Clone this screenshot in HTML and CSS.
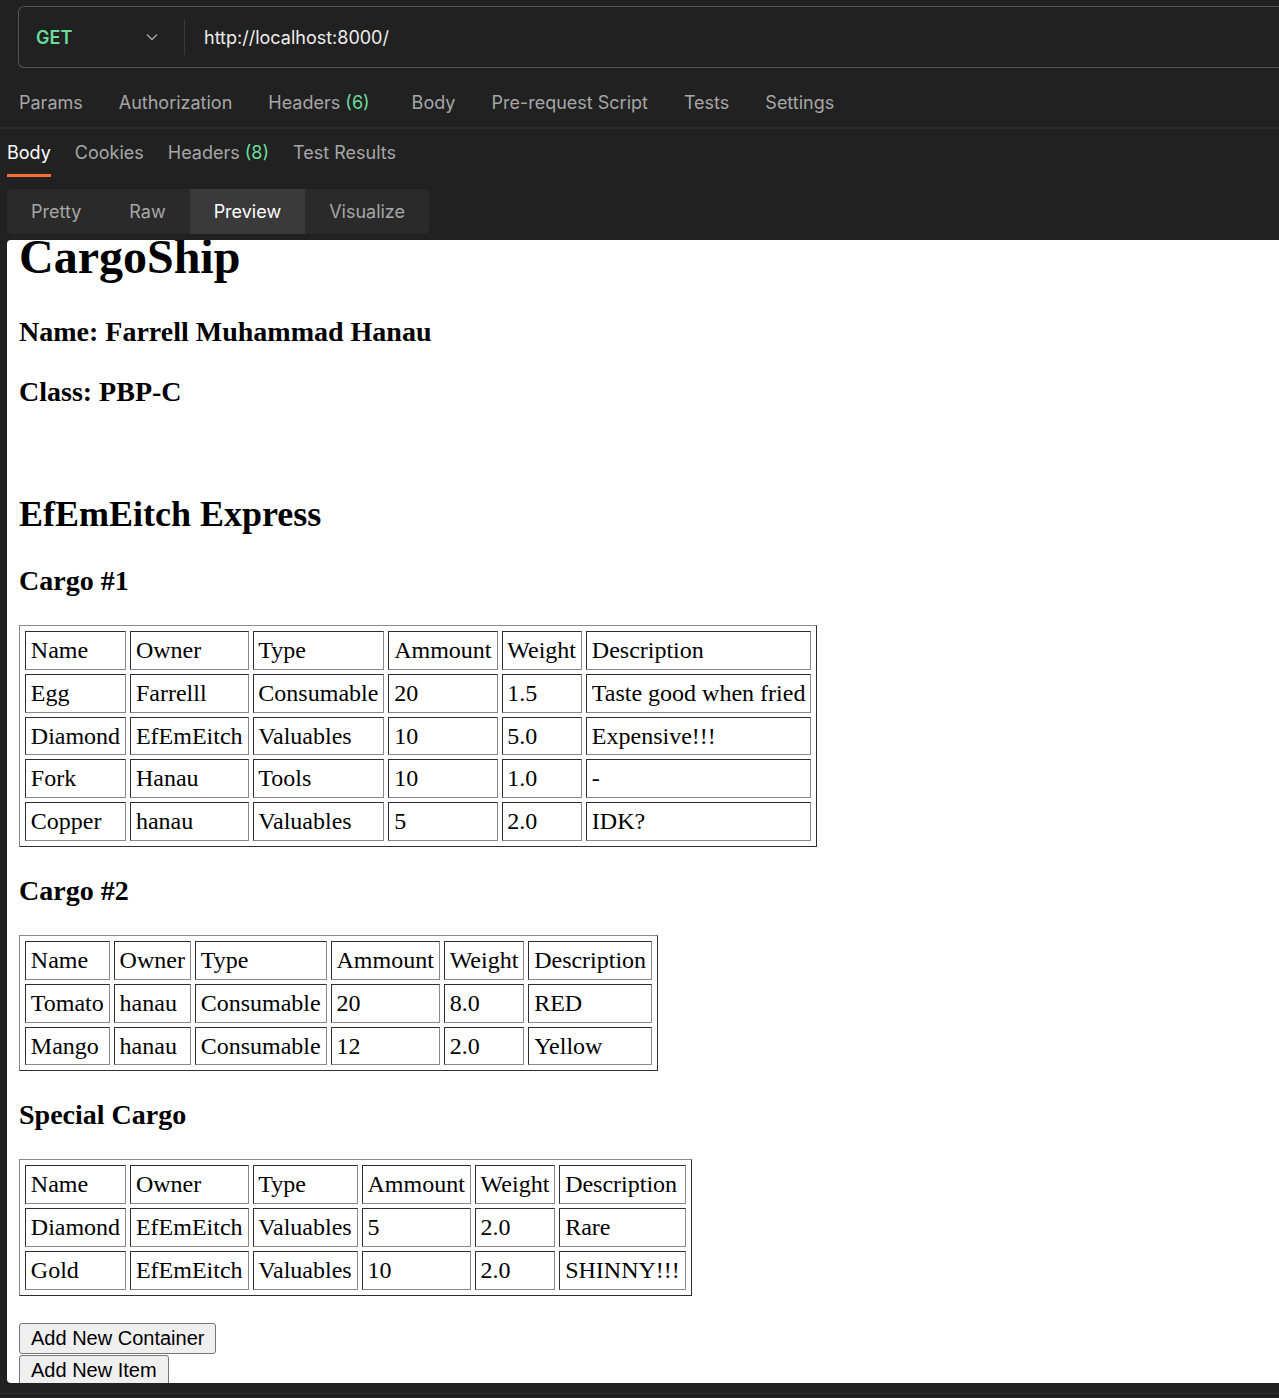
FILE: index.html
```html
<!DOCTYPE html>
<html lang="en">
<head>
<meta charset="utf-8">
<title>CargoShip - Postman</title>
<link rel="stylesheet" href="styles.css">
</head>
<body>
<div class="app">
  <div class="request">
    <div class="urlbar">
      <div class="method">
        <span class="get">GET</span>
        <svg class="chev" width="12" height="8" viewBox="0 0 12 8"><path d="M1 1.5 L6 6.5 L11 1.5" fill="none" stroke="#a6a6a6" stroke-width="1.3"/></svg>
      </div>
      <div class="divider"></div>
      <div class="url">http://localhost:8000/</div>
    </div>
    <nav class="req-tabs">
      <span class="tab">Params</span>
      <span class="tab">Authorization</span>
      <span class="tab tab-wide">Headers <span class="count">(6)</span></span>
      <span class="tab">Body</span>
      <span class="tab">Pre-request Script</span>
      <span class="tab">Tests</span>
      <span class="tab">Settings</span>
    </nav>
  </div>
  <div class="splitter"></div>
  <div class="response">
    <nav class="res-tabs">
      <span class="rtab active">Body</span>
      <span class="rtab">Cookies</span>
      <span class="rtab">Headers <span class="count">(8)</span></span>
      <span class="rtab">Test Results</span>
    </nav>
    <div class="seg">
      <span class="seg-item">Pretty</span>
      <span class="seg-item">Raw</span>
      <span class="seg-item active">Preview</span>
      <span class="seg-item">Visualize</span>
    </div>
    <div class="preview">
      <h1>CargoShip</h1>
      <h3>Name: Farrell Muhammad Hanau</h3>
      <h3>Class: PBP-C</h3>
      <div class="spacer"></div>
      <h2>EfEmEitch Express</h2>

      <h3>Cargo #1</h3>
      <table>
        <tr><td>Name</td><td>Owner</td><td>Type</td><td>Ammount</td><td>Weight</td><td>Description</td></tr>
        <tr><td>Egg</td><td>Farrelll</td><td>Consumable</td><td>20</td><td>1.5</td><td>Taste good when fried</td></tr>
        <tr><td>Diamond</td><td>EfEmEitch</td><td>Valuables</td><td>10</td><td>5.0</td><td>Expensive!!!</td></tr>
        <tr><td>Fork</td><td>Hanau</td><td>Tools</td><td>10</td><td>1.0</td><td>-</td></tr>
        <tr><td>Copper</td><td>hanau</td><td>Valuables</td><td>5</td><td>2.0</td><td>IDK?</td></tr>
      </table>

      <h3>Cargo #2</h3>
      <table>
        <tr><td>Name</td><td>Owner</td><td>Type</td><td>Ammount</td><td>Weight</td><td>Description</td></tr>
        <tr><td>Tomato</td><td>hanau</td><td>Consumable</td><td>20</td><td>8.0</td><td>RED</td></tr>
        <tr><td>Mango</td><td>hanau</td><td>Consumable</td><td>12</td><td>2.0</td><td>Yellow</td></tr>
      </table>

      <h3>Special Cargo</h3>
      <table>
        <tr><td>Name</td><td>Owner</td><td>Type</td><td>Ammount</td><td>Weight</td><td>Description</td></tr>
        <tr><td>Diamond</td><td>EfEmEitch</td><td>Valuables</td><td>5</td><td>2.0</td><td>Rare</td></tr>
        <tr><td>Gold</td><td>EfEmEitch</td><td>Valuables</td><td>10</td><td>2.0</td><td>SHINNY!!!</td></tr>
      </table>

      <div class="actions">
        <button type="button">Add New Container</button>
        <button type="button">Add New Item</button>
      </div>
    </div>
  </div>
  <div class="footer"></div>
</div>
</body>
</html>
```

FILE: styles.css
```css
html, body {
  margin: 0;
  padding: 0;
  background: #212121;
  overflow: hidden;
}

.app {
  height: 1398px;
  font-family: Inter, "Noto Sans", sans-serif;
  color: #a6a6a6;
}

/* request area */
.request {
  padding: 6px 0 0 18px;
}

.urlbar {
  display: flex;
  align-items: center;
  box-sizing: border-box;
  height: 62px;
  border: 1px solid #555555;
  border-right: none;
  border-radius: 6px 0 0 6px;
}

.method {
  display: flex;
  align-items: center;
  box-sizing: border-box;
  width: 165px;
  padding-left: 17px;
}

.get {
  color: #6bdd9a;
  font-size: 18px;
  font-weight: 600;
}

.chev {
  margin-left: auto;
  margin-right: 26px;
}

.divider {
  width: 1px;
  height: 36px;
  background: #3a3a3a;
}

.url {
  padding-left: 19px;
  font-size: 18px;
  color: #ededed;
}

.req-tabs {
  display: flex;
  box-sizing: border-box;
  height: 59px;
  padding: 23px 0 0 1px;
  gap: 36px;
}

.tab {
  font-size: 18px;
  line-height: 24px;
  color: #a6a6a6;
}

.tab-wide {
  margin-right: 6px;
}

.count {
  color: #6bdd9a;
}

.splitter {
  height: 2px;
  background: #2c2c2c;
}

/* response area */
.res-tabs {
  display: flex;
  gap: 24px;
  padding-left: 7px;
}

.rtab {
  padding: 12px 0 9px;
  font-size: 18px;
  line-height: 24px;
  border-bottom: 3px solid transparent;
  color: #a6a6a6;
}

.rtab.active {
  color: #ffffff;
  border-bottom-color: #ff6c37;
}

.seg {
  display: inline-flex;
  margin: 12px 0 0 7px;
  height: 45px;
  background: #2a2a2a;
  border-radius: 5px;
  overflow: hidden;
}

.seg-item {
  display: flex;
  align-items: center;
  padding: 0 24px;
  font-size: 18px;
  color: #a6a6a6;
}

.seg-item.active {
  background: #3a3a3a;
  color: #ffffff;
}

.preview {
  box-sizing: border-box;
  height: 1143px;
  margin: 6px 0 0 7px;
  padding: 0 12px;
  background: #ffffff;
  border-radius: 4px 0 0 4px;
  overflow: hidden;
  font-family: "Liberation Serif", "Times New Roman", serif;
  color: #000000;
}

.preview h1 {
  font-size: 48px;
  line-height: 55px;
  margin: -11px 0 32px;
}

.preview h2 {
  font-size: 36px;
  line-height: 41px;
  margin: 30px 0;
}

.preview h3 {
  font-size: 28px;
  line-height: 32px;
  margin: 28px 0;
}

.spacer {
  height: 28px;
}

.preview table {
  border-collapse: separate;
  border-spacing: 4px;
  padding: 1px;
  border: 1px solid;
  border-color: #8a8a8a #2e2e2e #2e2e2e #8a8a8a;
  font-size: 24px;
}

.preview td {
  padding: 4px 5px 4px 4.8px;
  line-height: 28.8px;
  border: 1px solid;
  border-color: #2e2e2e #8a8a8a #8a8a8a #2e2e2e;
  white-space: nowrap;
}

.actions {
  display: flex;
  flex-direction: column;
  align-items: flex-start;
  gap: 1px;
  margin-top: 27px;
}

.actions button {
  font-family: "Liberation Sans", Arial, sans-serif;
  font-size: 20px;
  line-height: 23px;
  padding: 3px 11px;
  border: 1px solid #767676;
  border-radius: 3px;
  background: #efefef;
  color: #000000;
}

.footer {
  margin-top: 10px;
  height: 5px;
  border-top: 1px solid #2e2e2e;
  background: #1e1e1e;
}
```
